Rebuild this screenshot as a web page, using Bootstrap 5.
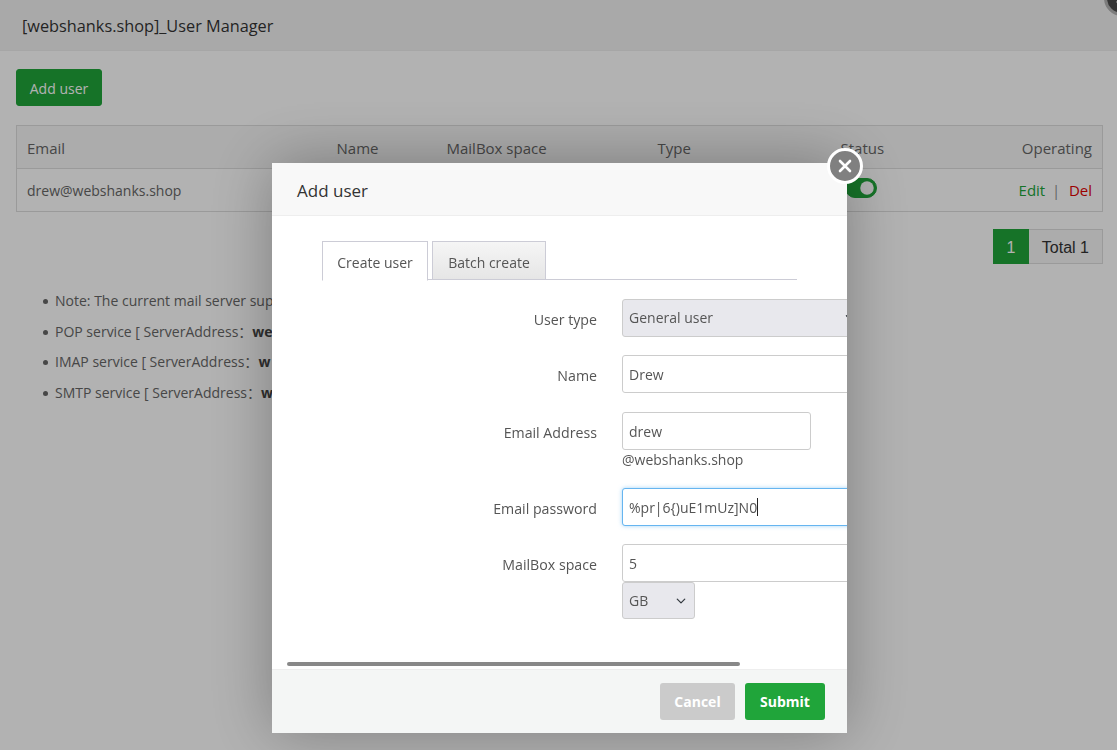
<!DOCTYPE html>
<html lang="en">
<head>
  <meta charset="UTF-8"/>
  <title>User Manager</title>
  <link href="https://cdn.jsdelivr.net/npm/bootstrap@5.3.0/dist/css/bootstrap.min.css" rel="stylesheet"/>
  <style>
    body {
      font-family: "Open Sans", "Noto Sans", "Noto Sans CJK SC", sans-serif;
      font-size: 14px;
      color: #666;
      background: #fff;
      overflow: hidden;
    }
    /* page behind the dialog */
    .page-head {
      height: 51px;
      padding: 0 22px;
      line-height: 52px;
      font-size: 16.3px;
      color: #333;
      background: #f3f3f3;
      border-bottom: 1px solid #eee;
    }
    .page-main { padding: 18px 14px 0 16px; }
    .btn-add {
      background: #20a53a;
      border-color: #20a53a;
      color: #fff;
      height: 37px;
      width: 86px;
      padding: 1px 0 0;
      font-size: 14px;
      border-radius: 3px;
    }
    .user-table {
      margin: 19px 0 0;
      table-layout: fixed;
      width: 1087px;
      border: 1px solid #ddd;
      color: #666;
    }
    .user-table th, .user-table td {
      height: 43px;
      padding: 0 10px;
      font-weight: 400;
      vertical-align: middle;
      border-bottom: 1px solid #ddd;
    }
    .user-table th { background: #f6f6f6; font-size: 15px; padding-top: 2px; }
    .col-mail { width: 310px; }
    .col-name { width: 110px; }
    .col-space { width: 211px; }
    .col-type { width: 183px; }
    .ok-link { color: #20a53a; text-decoration: none; font-size: 15px; }
    .del-link { color: #e00000; text-decoration: none; font-size: 15px; }
    .sep { color: #888; margin: 0 9px 0 7px; }
    .form-check-input.sw-on, .form-check-input.sw-on:checked {
      width: 32px;
      height: 20px;
      margin: 0 0 0 4px;
      background-color: #20a53a;
      border-color: #20a53a;
    }
    .pager-row { margin-top: 17px; }
    .pager-row .page-link {
      height: 35px;
      padding: 0 13px;
      line-height: 36px;
      font-family: "Liberation Sans", Arial, sans-serif;
      font-size: 16px;
      color: #333;
      border-color: #ddd;
      border-radius: 0 !important;
      background: #f6f6f6;
    }
    .pager-row .active .page-link {
      width: 36px;
      padding: 0;
      text-align: center;
      background: #20a53a;
      border-color: #20a53a;
      color: #fff;
    }
    .note-list {
      margin: 22px 0 0;
      padding-left: 39px;
      list-style: none;
    }
    .note-list li {
      position: relative;
      height: 30.7px;
      line-height: 30.7px;
      white-space: nowrap;
    }
    .note-list li::before {
      content: "";
      position: absolute;
      left: -12px;
      top: 13px;
      width: 5px;
      height: 5px;
      border-radius: 50%;
      background: #666;
    }
    .note-list b { color: #444; }

    /* layer */
    .dim-layer {
      position: fixed;
      inset: 0;
      z-index: 10;
      background: rgba(0, 0, 0, .3);
    }
    .x-round {
      position: fixed;
      width: 36px;
      height: 36px;
      border-radius: 50%;
      border: 3px solid #fff;
      background: #808080;
      display: flex;
      align-items: center;
      justify-content: center;
    }
    .x-back { left: 1104px; top: -20px; z-index: 5; border-color: #b3b3b3; background: #4d4d4d; }
    .x-front { left: 827px; top: 148px; z-index: 30; }
    .dlg-box {
      position: fixed;
      left: 272px;
      top: 163px;
      z-index: 20;
      width: 575px;
      height: 570px;
      display: flex;
      flex-direction: column;
      background: #fff;
      box-shadow: 0 0 60px rgba(0, 0, 0, .3);
    }
    .dlg-head {
      height: 53px;
      padding: 0 25px;
      line-height: 55px;
      font-size: 17px;
      color: #333;
      background: #f8f8f8;
      border-bottom: 1px solid #eee;
    }
    .dlg-body {
      flex: 1;
      overflow: hidden;
      padding: 25px 0 0 50px;
      position: relative;
    }
    .tab-bar {
      width: 475px;
      gap: 4px;
      border-bottom: 1px solid #ccccd6;
      height: 39px;
    }
    .tab-bar .nav-link {
      width: 114px;
      height: 39px;
      padding: 0;
      text-align: center;
      line-height: 42px;
      color: #555;
      font-size: 14px;
      border: 1px solid #ccccd6;
      border-radius: 0;
      margin: 0;
      background: linear-gradient(#f5f5f5, #e6e6e6);
    }
    .tab-bar .nav-link.active {
      width: 106px;
      height: 40px;
      background: #fff;
      border-bottom-color: #fff;
      color: #555;
    }
    .form-area { margin: 19px 0 0 -50px; }
    .field-row { display: flex; gap: 25px; margin-bottom: 18px; }
    .mail-row { margin-top: 19px; }
    .field-lbl {
      width: 325px;
      height: 38px;
      flex: none;
      margin: 0;
      text-align: right;
      line-height: 41px;
      font-size: 14.2px;
      color: #555;
    }
    .field-box { width: 250px; flex: none; }
    .dlg-body .form-control, .dlg-body .form-select {
      height: 38px;
      padding: 0 6px;
      font-size: 14px;
      color: #555;
      border: 1px solid #ccc;
      border-radius: 3px;
    }
    .dlg-body .form-select { background-color: #e8e8ed; padding-bottom: 1px; }
    .dlg-body .short-box { width: 189px; }
    .dlg-body .unit-pick {
      width: 73px;
      height: 37px;
      background-position: right 8px center;
      background-size: 10px;
    }
    .domain-text { line-height: 20px; color: #555; }
    .dlg-body .form-control.is-focus {
      border-color: #66b5f0;
      box-shadow: 0 0 4px rgba(102, 181, 240, .6);
    }
    .caret-mark {
      position: absolute;
      left: 135px;
      top: 10px;
      width: 1px;
      height: 18px;
      background: #222;
    }
    .h-thumb {
      position: absolute;
      left: 15px;
      top: 446px;
      width: 453px;
      height: 4px;
      border-radius: 2px;
      background: #888;
    }
    .dlg-foot {
      height: 64px;
      padding: 0 22px 0 0;
      gap: 10px;
      background: #f4f6f5;
      border-top: 1px solid #eee;
    }
    .dlg-foot .btn {
      height: 37px;
      padding: 0;
      font-weight: 700;
      font-size: 14px;
      color: #fff;
      border: 0;
      border-radius: 3px;
    }
    .btn-cancel { width: 75px; background: #cbcbcb; }
    .btn-submit { width: 80px; background: #20a53a; }
  </style>
</head>
<body>

<div class="page-head">[webshanks.shop]_User Manager</div>

<div class="page-main">
  <button class="btn btn-add">Add user</button>

  <table class="user-table">
    <thead>
      <tr>
        <th class="col-mail">Email</th>
        <th class="col-name">Name</th>
        <th class="col-space">MailBox space</th>
        <th class="col-type">Type</th>
        <th>Status</th>
        <th class="text-end">Operating</th>
      </tr>
    </thead>
    <tbody>
      <tr>
        <td>drew@webshanks.shop</td>
        <td></td>
        <td></td>
        <td></td>
        <td>
          <div class="form-check form-switch m-0 p-0 d-flex">
            <input class="form-check-input sw-on" type="checkbox" checked/>
          </div>
        </td>
        <td class="text-end"><a class="ok-link" href="#">Edit</a><span class="sep">|</span><a class="del-link" href="#">Del</a></td>
      </tr>
    </tbody>
  </table>

  <div class="pager-row d-flex justify-content-end">
    <ul class="pagination m-0">
      <li class="page-item active"><a class="page-link" href="#">1</a></li>
      <li class="page-item"><a class="page-link" href="#">Total 1</a></li>
    </ul>
  </div>

  <ul class="note-list">
    <li>Note: The current mail server sup</li>
    <li>POP service [ ServerAddress：<b>we</b></li>
    <li>IMAP service [ ServerAddress：<b>w</b></li>
    <li>SMTP service [ ServerAddress：<b>w</b></li>
  </ul>
</div>

<div class="x-round x-back">
  <svg width="16" height="16" viewBox="0 0 16 16"><path d="M3 3l10 10M13 3L3 13" stroke="#ccc" stroke-width="3"/></svg>
</div>
<div class="dim-layer"></div>

<div class="dlg-box">
  <div class="dlg-head">Add user</div>
  <div class="dlg-body">
    <ul class="nav tab-bar">
      <li class="nav-item"><a class="nav-link active" href="#">Create user</a></li>
      <li class="nav-item"><a class="nav-link" href="#">Batch create</a></li>
    </ul>

    <form class="form-area">
      <div class="field-row">
        <label class="field-lbl">User type</label>
        <div class="field-box">
          <select class="form-select"><option>General user</option></select>
        </div>
      </div>
      <div class="field-row">
        <label class="field-lbl">Name</label>
        <div class="field-box"><input class="form-control" type="text" value="Drew"/></div>
      </div>
      <div class="field-row mail-row">
        <label class="field-lbl">Email Address</label>
        <div class="field-box">
          <input class="form-control short-box" type="text" value="drew"/>
          <div class="domain-text">@webshanks.shop</div>
        </div>
      </div>
      <div class="field-row">
        <label class="field-lbl">Email password</label>
        <div class="field-box position-relative">
          <input class="form-control is-focus" type="text" value="%pr|6{)uE1mUz]N0"/>
          <span class="caret-mark"></span>
        </div>
      </div>
      <div class="field-row">
        <label class="field-lbl">MailBox space</label>
        <div class="field-box">
          <input class="form-control" type="text" value="5"/>
          <select class="form-select unit-pick"><option>GB</option></select>
        </div>
      </div>
    </form>
    <div class="h-thumb"></div>
  </div>
  <div class="dlg-foot d-flex justify-content-end align-items-center">
    <button class="btn btn-cancel">Cancel</button>
    <button class="btn btn-submit">Submit</button>
  </div>
</div>

<div class="x-round x-front">
  <svg width="16" height="16" viewBox="0 0 16 16"><path d="M3 3l10 10M13 3L3 13" stroke="#fff" stroke-width="2.6" stroke-linecap="round"/></svg>
</div>

<script src="https://cdn.jsdelivr.net/npm/bootstrap@5.3.0/dist/js/bootstrap.bundle.min.js"></script>
</body>
</html>
